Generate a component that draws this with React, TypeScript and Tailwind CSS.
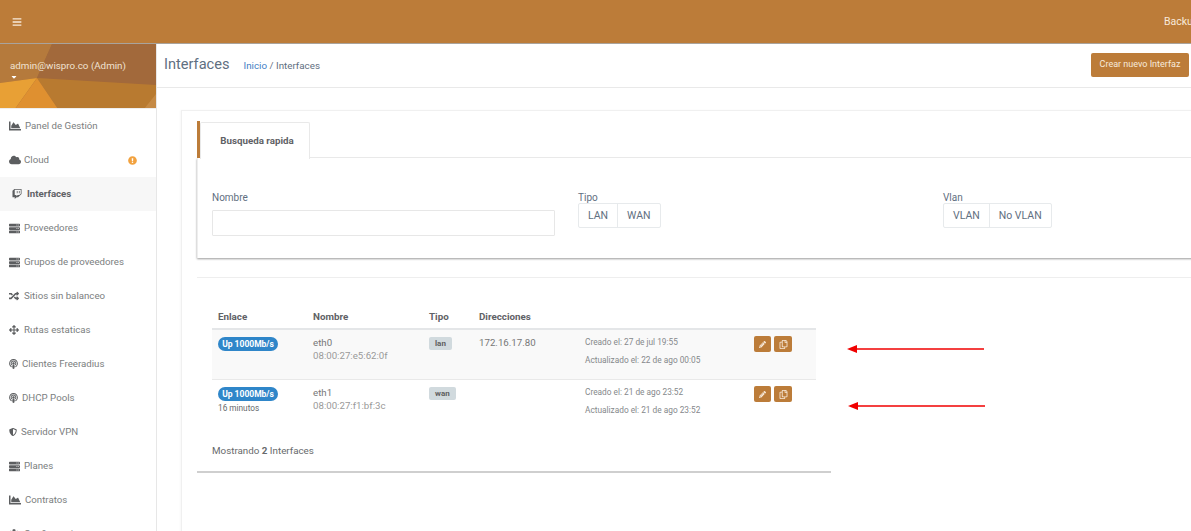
import { FaBars, FaChartArea, FaCloud, FaTwitch, FaServer, FaRandom, FaArrowsAlt, FaPodcast, FaShieldAlt, FaPencilAlt, FaRegCopy, FaExclamationCircle, FaCog, FaCaretDown } from 'react-icons/fa'
import type { ReactNode } from 'react'

const menu: { icon: ReactNode; label: string; gap: string }[] = [
    { icon: <FaChartArea className="w-[12px] h-[12px]" />, label: 'Panel de Gestión', gap: 'gap-[4px]' },
    { icon: <FaCloud className="w-[12px] h-[12px]" />, label: 'Cloud', gap: 'gap-[3px]' },
    { icon: <FaTwitch className="w-[10px] h-[10px] ml-[3px]" />, label: 'Interfaces', gap: 'gap-[5px]' },
    { icon: <FaServer className="w-[11px] h-[11px]" />, label: 'Proveedores', gap: 'gap-[4px]' },
    { icon: <FaServer className="w-[11px] h-[11px]" />, label: 'Grupos de proveedores', gap: 'gap-[4px]' },
    { icon: <FaRandom className="w-[10px] h-[10px]" />, label: 'Sitios sin balanceo', gap: 'gap-[5px]' },
    { icon: <FaArrowsAlt className="w-[10px] h-[10px]" />, label: 'Rutas estaticas', gap: 'gap-[5px]' },
    { icon: <FaPodcast className="w-[9px] h-[10px]" />, label: 'Clientes Freeradius', gap: 'gap-[4px]' },
    { icon: <FaPodcast className="w-[9px] h-[10px]" />, label: 'DHCP Pools', gap: 'gap-[4px]' },
    { icon: <FaShieldAlt className="w-[8px] h-[10px]" />, label: 'Servidor VPN', gap: 'gap-[4px]' },
    { icon: <FaServer className="w-[11px] h-[11px]" />, label: 'Planes', gap: 'gap-[4px]' },
    { icon: <FaChartArea className="w-[12px] h-[12px]" />, label: 'Contratos', gap: 'gap-[4px]' },
    { icon: <FaCog className="w-[10px] h-[10px]" />, label: 'Configuracion', gap: 'gap-[5px]' },
]

const rows = [
    { name: 'eth0', mac: '08:00:27:e5:62:0f', type: 'lan', addr: '172.16.17.80', since: '', created: '27 de jul 19:55', updated: '22 de ago 00:05', bg: 'bg-[#f9f9f9] border-b border-[#e9e9e9]' },
    { name: 'eth1', mac: '08:00:27:f1:bf:3c', type: 'wan', addr: '', since: '16 minutos', created: '21 de ago 23:52', updated: '21 de ago 23:52', bg: 'bg-white' },
]

function Arrow() {
    return (
        <svg width="138" height="10" viewBox="0 0 138 10" className="shrink-0">
            <path d="M9 5H137" stroke="#f00000" strokeWidth="1.5" />
            <path d="M0 5L10 1V9Z" fill="#f00000" />
        </svg>
    )
}

function Segments({ label, items }: { label: string; items: string[] }) {
    return (
        <div>
            <div className="text-[10px] leading-[12px] text-[#5f6f81]">{label}</div>
            <div className="flex w-fit h-[25px] -mt-[1px] border border-[#e7eaec] rounded-[2px] text-[10.5px] text-[#5f6f81]">
                {items.map((item, i) => (
                    <div key={item} className={`flex items-center px-[9px] ${i > 0 ? 'border-l border-[#e7eaec]' : ''}`}>{item}</div>
                ))}
            </div>
        </div>
    )
}

export default function App() {
    return (
        <div className="w-[1191px] h-[531px] overflow-hidden flex flex-col bg-white font-['Roboto',sans-serif] text-[#676a6c]">
            {/* Top bar */}
            <header className="h-[44px] shrink-0 bg-[#bc7c39] border-b border-[#a9a39c] flex items-center justify-between pl-[12px] text-[#f8eadb] relative z-10">
                <FaBars className="w-[10px] h-[10px]" />
                <span className="text-[10.5px] w-[27px] overflow-hidden whitespace-nowrap">Backup</span>
            </header>

            <div className="flex flex-1 min-h-0">
                {/* Sidebar */}
                <aside className="w-[157px] shrink-0 border-r border-[#e7e7e7] overflow-hidden">
                    <div className="relative h-[65px] bg-[#a2693b] border-b border-[#eee] overflow-hidden">
                        <svg className="absolute inset-0" width="156" height="65" viewBox="0 0 156 65" preserveAspectRatio="none">
                            <path d="M0 0H52L37 34L0 39Z" fill="#b57a3c" />
                            <path d="M52 0H156V41L37 34Z" fill="#a2693b" />
                            <path d="M37 34L156 41V65H58Z" fill="#b87a30" />
                            <path d="M0 39L37 34L15 65H0Z" fill="#e8a035" />
                            <path d="M37 34L58 65H15Z" fill="#df9030" />
                            <path d="M156 50V65H144Z" fill="#c58a45" />
                        </svg>
                        <div className="relative pt-[15px] pl-[10px] text-[9.8px] leading-[13px] text-[#f0e2d2]">
                            admin@wispro.co (Admin)
                            <FaCaretDown className="w-[8px] h-[8px] mt-[1px] text-white" />
                        </div>
                    </div>
                    <nav>
                        {menu.map(({ icon, label, gap }) => {
                            const active = label === 'Interfaces'
                            return (
                                <div key={label} className={`h-[34px] flex items-center pl-[9px] pr-[19px] ${gap} text-[9.7px] ${active ? 'bg-[#f7f7f7] font-bold text-[#5f6266]' : 'text-[#7b7e80]'}`}>
                                    <span className="text-[#5c5e60] flex items-center">{icon}</span>
                                    <span>{label}</span>
                                    {label === 'Cloud' && <FaExclamationCircle className="ml-auto w-[9px] h-[9px] text-[#f2a23f]" />}
                                </div>
                            )
                        })}
                    </nav>
                </aside>

                {/* Main */}
                <main className="flex-1 min-w-0">
                    <div className="h-[44px] border-b border-[#e9e9e9] flex items-center justify-between pl-[7px] pr-[2px]">
                        <div className="flex items-center gap-[14px]">
                            <h1 className="text-[14.6px] text-[#5f6f81] -mt-[2px]">Interfaces</h1>
                            <div className="text-[9.8px] text-[#5f6f81] mt-[2px]"><span className="text-[#3f7fc4]">Inicio</span> / Interfaces</div>
                        </div>
                        <button className="h-[24px] w-[98px] bg-[#bc7c39] rounded-[2px] text-[9px] text-[#f8eadb] -mt-[2px]">Crear nuevo Interfaz</button>
                    </div>

                    <div className="ml-[24px] mt-[22px] w-[1040px] h-[600px] border-l border-t border-[#f0f0f0] pl-[15px] pt-[10px] shadow-[-1px_0_2px_rgba(0,0,0,0.03)]">
                        {/* Quick search */}
                        <div className="flex">
                            <div className="h-[37px] w-[113px] border-l-[3px] border-[#bc7c39] bg-white flex">
                                <div className="flex-1 border border-b-0 border-[#e9e9e9] rounded-t-[2px] flex items-center justify-center pl-[4px] text-[9.75px] font-bold text-[#5f6266] relative top-[1px] bg-white z-[1]">Busqueda rapida</div>
                            </div>
                            <div className="flex-1 border-b border-[#e9e9e9]" />
                        </div>
                        <div className="h-[100px] border-l border-[#eee] shadow-[0_1px_2px_rgba(0,0,0,0.4)] pl-[14px] pt-[34px] flex">
                            <div className="w-[343px] mr-[23px]">
                                <div className="text-[10px] leading-[12px] text-[#5f6f81]">Nombre</div>
                                <input className="block mt-[6px] w-full h-[26px] border border-[#e7e7e7] rounded-[1px]" />
                            </div>
                            <div className="w-[365px]"><Segments label="Tipo" items={['LAN', 'WAN']} /></div>
                            <Segments label="Vlan" items={['VLAN', 'No VLAN']} />
                        </div>

                        <div className="mt-[19px] border-t border-[#eee]" />

                        {/* Interfaces table */}
                        <div className="w-[634px] h-[195px] pl-[15px] pt-[27px] border-b-2 border-[#cfcfcf]">
                            <div className="w-[604px]">
                                <div className="flex h-[25px] border-b-2 border-[#e4e6e8] text-[9.8px] font-bold text-[#5f6266] pt-[5px]">
                                    <div className="w-[101px] pl-[6px]">Enlace</div>
                                    <div className="w-[116px]">Nombre</div>
                                    <div className="w-[50px]">Tipo</div>
                                    <div>Direcciones</div>
                                </div>
                                {rows.map(r => (
                                    <div key={r.name} className={`flex h-[50px] ${r.bg} pt-[6px]`}>
                                        <div className="w-[101px] pl-[6px]">
                                            <div className="flex w-[60px] h-[14px] mt-[1px] items-center justify-center rounded-full bg-[#2f86c9] text-[8.5px] font-bold text-white">Up 1000Mb/s</div>
                                            {r.since && <div className="text-[8.25px] leading-[11px] mt-[2px] text-[#676a6c]">{r.since}</div>}
                                        </div>
                                        <div className="w-[116px] text-[9.7px] leading-[13px] text-[#777]">
                                            <div>{r.name}</div>
                                            <div className="text-[#999]">{r.mac}</div>
                                        </div>
                                        <div className="w-[50px] flex items-start">
                                            <div className="flex h-[13px] mt-[1px] items-center rounded-[2px] bg-[#d1dade] px-[6px] text-[8px] font-bold text-[#5e5e5e]">{r.type}</div>
                                        </div>
                                        <div className="w-[106px] text-[9.7px] leading-[13px] text-[#777]">{r.addr}</div>
                                        <div className="w-[169px] text-[8.3px] leading-[18px] -mt-[3px] text-[#85888b]">
                                            <div>Creado el: {r.created}</div>
                                            <div>Actualizado el: {r.updated}</div>
                                        </div>
                                        <div className="flex gap-[3px] h-[16px]">
                                            <button className="w-[17px] h-[16px] rounded-[2px] bg-[#bc7c39] flex items-center justify-center text-[#f8eadb]"><FaPencilAlt className="w-[7px] h-[7px]" /></button>
                                            <button className="w-[18px] h-[16px] rounded-[2px] bg-[#bc7c39] flex items-center justify-center text-[#f8eadb]"><FaRegCopy className="w-[9px] h-[9px]" /></button>
                                        </div>
                                    </div>
                                ))}
                                <div className="mt-[14px] text-[9.8px] text-[#676a6c]">Mostrando <b>2</b> Interfaces</div>
                            </div>
                        </div>
                    </div>
                </main>
            </div>

            {/* Annotation arrows */}
            <div className="fixed left-[847px] top-[344px]"><Arrow /></div>
            <div className="fixed left-[848px] top-[401px]"><Arrow /></div>
        </div>
    )
}
